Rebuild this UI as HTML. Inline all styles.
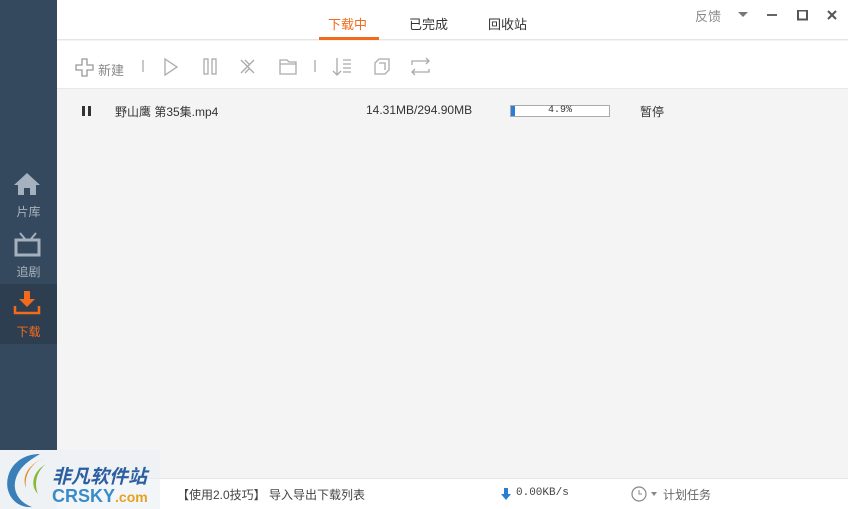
<!DOCTYPE html>
<html><head><meta charset="utf-8"><style>
*{margin:0;padding:0;box-sizing:border-box}
body{width:848px;height:509px;overflow:hidden;font-family:"Liberation Sans","Noto Sans CJK SC",sans-serif;background:#f4f4f4;position:relative;font-size:12px;color:#333}
.side{position:absolute;left:0;top:0;width:57px;height:450px;background:#34495e}
.sel{position:absolute;left:0;top:284px;width:57px;height:60px;background:#2c3e50}
.lbl{position:absolute;width:57px;text-align:center;font-size:12px;color:#aab4c0}
.hdr{position:absolute;left:57px;top:0;right:0;height:40px;background:#fff;border-bottom:1px solid #e6e6e6}
.tb{position:absolute;left:57px;top:41px;right:0;height:48px;background:#fff;border-bottom:1px solid #e8e8e8}
.t{position:absolute;font-size:13px}
.sb{position:absolute;left:57px;top:478px;right:0;height:31px;background:#fff;border-top:1px solid #e6e6e6}
</style></head><body>
<div class="side"></div>
<div class="sel"></div>
<svg style="position:absolute;left:13px;top:172px" width="28" height="24"><path d="M14 1 L1 13 H5 V23 H11 V16 H17 V23 H23 V13 H27 Z" fill="#a5b1be"/></svg>
<div class="lbl" style="top:203px">片库</div>
<svg style="position:absolute;left:14px;top:232px" width="28" height="26"><path d="M6 1 L11 7 M22 1 L17 7" stroke="#a5b1be" stroke-width="2"/><rect x="2" y="8" width="23" height="15" fill="none" stroke="#a5b1be" stroke-width="3"/></svg>
<div class="lbl" style="top:263px">追剧</div>
<svg style="position:absolute;left:13px;top:290px" width="28" height="26"><path d="M11 1 H17 V9 H22 L14 17 L6 9 H11 Z" fill="#f26b1d"/><path d="M2 16 V23 H26 V16" fill="none" stroke="#f26b1d" stroke-width="2.5"/></svg>
<div class="lbl" style="top:323px;color:#f26b1d">下载</div>
<div class="hdr">
 <div class="t" style="left:271px;top:14px;color:#f26b1d">下载中</div>
 <div style="position:absolute;left:262px;top:37px;width:60px;height:3px;background:#f26b1d"></div>
 <div class="t" style="left:352px;top:14px">已完成</div>
 <div class="t" style="left:431px;top:14px">回收站</div>
 <div class="t" style="left:638px;top:6px;color:#8a8a8a">反馈</div>
 <svg style="position:absolute;left:680px;top:10px" width="100" height="14"><path d="M1 2 H11 L6 7 Z" fill="#777"/><rect x="30" y="4" width="10" height="2" fill="#666"/><rect x="61" y="0.5" width="9" height="9" fill="none" stroke="#555" stroke-width="2"/><path d="M91 1 L99 9 M99 1 L91 9" stroke="#555" stroke-width="2"/></svg>
</div>
<div class="tb">
 <svg style="position:absolute;left:18px;top:17px" width="20" height="20"><path d="M7 1 H12 V7 H18 V12 H12 V18 H7 V12 H1 V7 H7 Z" fill="none" stroke="#999" stroke-width="1.3"/></svg>
 <div class="t" style="left:41px;top:19px;color:#888">新建</div>
 <svg style="position:absolute;left:80px;top:15px" width="320" height="24" fill="none" stroke="#aaa" stroke-width="1.3">
  <path d="M6 4 V16"/><path d="M28 3 L40 11 L28 19 Z"/><rect x="67" y="3" width="4" height="15"/><rect x="75" y="3" width="4" height="15"/>
  <path d="M104 4 L117 17 M117 4 L104 17 M108 4 L113 9 M108 17 L113 12"/>
  <path d="M143 4 H150 L152 6 H159 V18 H143 Z M143 8 H159"/>
  <path d="M178 4 V16"/><path d="M200 2 V19 M196 15 L200 19 L204 15 M206 4 H214 M206 8 H214 M206 12 H214 M206 16 H214"/>
  <path d="M238 7 L242 3 H252 V14 L248 18 H238 Z M242 7 H248 V14"/>
  <path d="M275 9 V5 H292 M289 2 L292 5 L289 8 M292 13 V16 H275 M278 13 L275 16 L278 19"/>
 </svg>
</div>
<div style="position:absolute;left:82px;top:106px;width:3px;height:10px;background:#333"></div>
<div style="position:absolute;left:88px;top:106px;width:3px;height:10px;background:#333"></div>
<div class="t" style="left:115px;top:103px;font-size:12px">野山鹰 第35集.mp4</div>
<div class="t" style="left:366px;top:103px;font-size:12px">14.31MB/294.90MB</div>
<div style="position:absolute;left:510px;top:105px;width:100px;height:12px;border:1px solid #aaa;background:#fff"><div style="width:4px;height:10px;background:#2a7fd4"></div><div style="position:absolute;left:0;top:0;width:100%;text-align:center;font-size:10px;line-height:10px;font-family:'Liberation Mono',monospace">4.9%</div></div>
<div class="t" style="left:640px;top:103px;font-size:12px">暂停</div>
<div class="sb">
 <div class="t" style="left:120px;top:7px;font-size:12px;color:#444">【使用2.0技巧】 导入导出下载列表</div>
 <svg style="position:absolute;left:444px;top:9px" width="10" height="12"><path d="M3 0 H7 V6 H10 L5 12 L0 6 H3 Z" fill="#2a7fd4"/></svg>
 <div class="t" style="left:459px;top:8px;font-size:11px;font-family:'Liberation Mono',monospace;color:#444">0.00KB/s</div>
 <svg style="position:absolute;left:574px;top:7px" width="30" height="16"><circle cx="8" cy="8" r="7" fill="none" stroke="#888" stroke-width="1.2"/><path d="M8 4 V8 H11" stroke="#888" fill="none"/><path d="M20 6 H26 L23 10 Z" fill="#888"/></svg>
 <div class="t" style="left:606px;top:7px;font-size:12px;color:#666">计划任务</div>
</div>
<div style="position:absolute;left:0;top:450px;width:160px;height:59px;background:rgba(235,240,245,.6)"></div>
<svg style="position:absolute;left:2px;top:450px" width="55" height="59"><path d="M38 4 C15 4 2 22 6 40 C9 52 20 58 30 57 C16 52 10 40 14 28 C18 16 28 10 38 4 Z" fill="#3a7fb8"/><path d="M42 8 C28 14 22 26 24 38 C20 28 24 16 42 8 Z" fill="#e08a2a"/><path d="M44 14 C34 22 32 34 36 44 C28 36 30 22 44 14 Z" fill="#8ab83a"/></svg>
<div style="position:absolute;left:52px;top:462px;font-size:19px;font-weight:bold;font-style:italic;color:#2d5fa0">非凡软件站</div>
<div style="position:absolute;left:52px;top:486px;font-size:18px;font-weight:bold;color:#3a8cc8">CRSKY<span style="color:#e8a020;font-size:14px">.com</span></div>
</body></html>
